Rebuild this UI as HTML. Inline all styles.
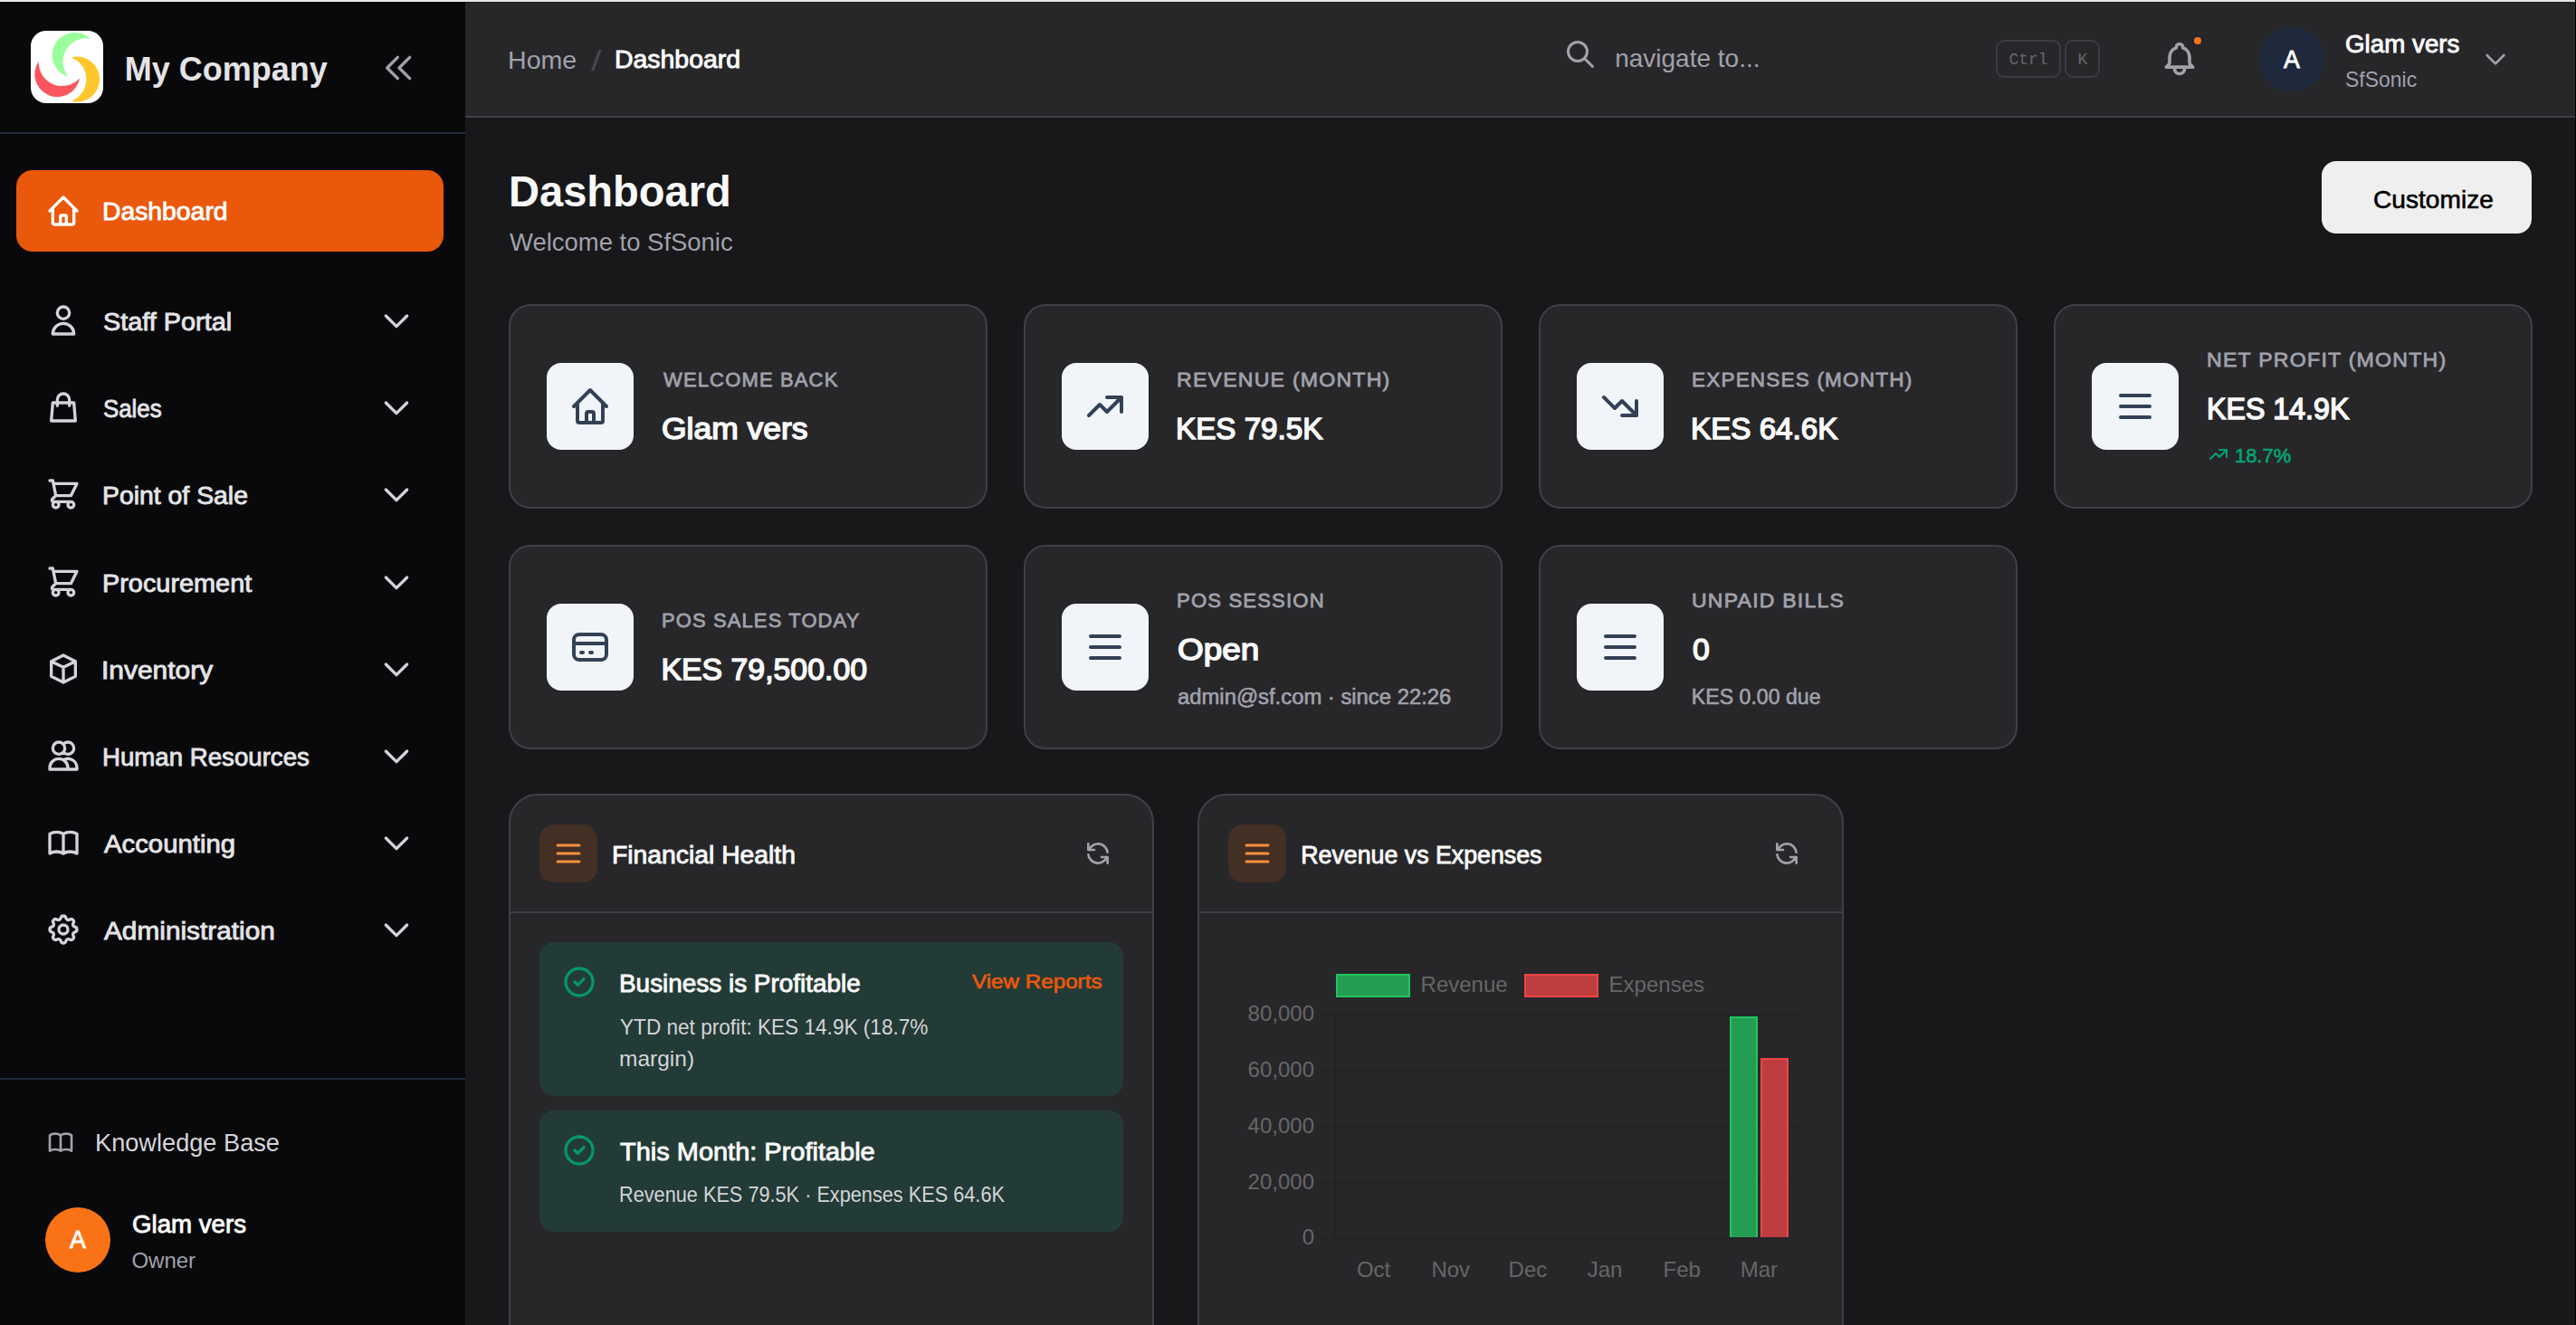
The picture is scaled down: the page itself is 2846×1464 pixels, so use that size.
<!DOCTYPE html>
<html lang="en"><head><meta charset="utf-8"><title>Dashboard - My Company</title>
<style>
html,body{margin:0;padding:0;background:#18181b;}
body{width:2846px;height:1464px;overflow:hidden;position:relative;font-family:"Liberation Sans",sans-serif;}
.a{position:absolute;box-sizing:border-box;}
.t{white-space:nowrap;line-height:1;transform-origin:0 0;font-family:"Liberation Sans",sans-serif;}
.m{font-family:"Liberation Mono",monospace;}
</style></head><body>
<div class="a" style="left:0px;top:0px;width:2846px;height:1464px;background:#18181b;"></div>
<div class="a" style="left:0px;top:2px;width:514px;height:1462px;background:#09090b;"></div>
<div class="a" style="left:514px;top:2px;width:2332px;height:126px;background:#27272a;"></div>
<div class="a" style="left:514px;top:128px;width:2332px;height:2px;background:#3f3f46;"></div>
<div class="a" style="left:0px;top:0px;width:2846px;height:1px;background:#e3e5e2;"></div>
<div class="a" style="left:0px;top:1px;width:2846px;height:1px;background:#ecedea;"></div>
<div class="a" style="left:0px;top:2px;width:514px;height:1px;background:#000;"></div>
<div class="a" style="left:514px;top:2px;width:2332px;height:1px;background:#1e1e21;"></div>
<div class="a" style="left:2845px;top:0px;width:1px;height:1464px;background:#000;"></div>
<div class="a" style="left:0px;top:146px;width:514px;height:2px;background:#1e293b;"></div>
<div class="a" style="left:0px;top:1191px;width:514px;height:2px;background:#1e293b;"></div>
<svg class="a" style="left:34px;top:34px" width="80" height="80" viewBox="0 0 80 80">
<rect width="80" height="80" rx="17" fill="#fff"/>
<path d="M65.8 8.7A25 25 0 1 0 41.7 50.9A25.8 25.8 0 0 1 65.8 8.7Z" fill="#99ff99"/>
<path d="M8.8 33.8A25 25 0 1 0 54 52.2A25.8 25.8 0 0 1 8.8 33.8Z" fill="#fb5660"/>
<path d="M44.7 77.7A25 25 0 1 0 44.7 29.4A25.8 25.8 0 0 1 44.7 77.7Z" fill="#ffc72c"/>
</svg>
<div class="a t" style="top:58.53px;font-size:36px;color:#e4e4e7;font-weight:700;left:137.76px;">My Company</div>
<svg class="a" style="left:421.0px;top:55.0px" width="40" height="40" viewBox="0 0 24 24" fill="none" stroke="#a1a1aa" stroke-width="2" stroke-linecap="round" stroke-linejoin="round"><path d="M11 19l-7-7 7-7m8 14l-7-7 7-7"/></svg>
<div class="a" style="left:18px;top:188px;width:472px;height:90px;background:#ea580c;border-radius:18px;"></div>
<svg class="a" style="left:50.0px;top:213.0px" width="40" height="40" viewBox="0 0 24 24" fill="none" stroke="#fff" stroke-width="2" stroke-linecap="round" stroke-linejoin="round"><path d="M3 12l2-2m0 0l7-7 7 7M5 10v10a1 1 0 001 1h3m10-11l2 2m-2-2v10a1 1 0 01-1 1h-3m-6 0a1 1 0 001-1v-4a1 1 0 011-1h2a1 1 0 011 1v4a1 1 0 001 1m-6 0h6"/></svg>
<div class="a t" style="top:220.91px;font-size:26.78px;color:#fff;transform:scaleX(1.0582);left:112.68px;-webkit-text-stroke:0.84px #fff;">Dashboard</div>
<svg class="a" style="left:50.0px;top:334.0px" width="40" height="40" viewBox="0 0 24 24" fill="none" stroke="#d4d4d8" stroke-width="2" stroke-linecap="round" stroke-linejoin="round"><path d="M16 7a4 4 0 11-8 0 4 4 0 018 0zM12 14a7 7 0 00-7 7h14a7 7 0 00-7-7z"/></svg>
<div class="a t" style="top:343.11px;font-size:26.78px;color:#e4e4e7;transform:scaleX(1.0776);left:113.65px;-webkit-text-stroke:0.84px #e4e4e7;">Staff Portal</div>
<svg class="a" style="left:418.0px;top:334.0px" width="40" height="40" viewBox="0 0 24 24" fill="none" stroke="#d4d4d8" stroke-width="2" stroke-linecap="round" stroke-linejoin="round"><path d="M19 9l-7 7-7-7"/></svg>
<svg class="a" style="left:50.0px;top:430.0px" width="40" height="40" viewBox="0 0 24 24" fill="none" stroke="#d4d4d8" stroke-width="2" stroke-linecap="round" stroke-linejoin="round"><path d="M16 11V7a4 4 0 00-8 0v4M5 9h14l1 12H4L5 9z"/></svg>
<div class="a t" style="top:439.26px;font-size:26.78px;color:#e4e4e7;transform:scaleX(0.9658);left:113.74px;-webkit-text-stroke:0.84px #e4e4e7;">Sales</div>
<svg class="a" style="left:418.0px;top:430.0px" width="40" height="40" viewBox="0 0 24 24" fill="none" stroke="#d4d4d8" stroke-width="2" stroke-linecap="round" stroke-linejoin="round"><path d="M19 9l-7 7-7-7"/></svg>
<svg class="a" style="left:50.0px;top:526.0px" width="40" height="40" viewBox="0 0 24 24" fill="none" stroke="#d4d4d8" stroke-width="2" stroke-linecap="round" stroke-linejoin="round"><path d="M3 3h2l.4 2M7 13h10l4-8H5.4M7 13L5.4 5M7 13l-2.293 2.293c-.63.63-.184 1.707.707 1.707H17m0 0a2 2 0 100 4 2 2 0 000-4zm-8 2a2 2 0 11-4 0 2 2 0 014 0z"/></svg>
<div class="a t" style="top:535.41px;font-size:26.78px;color:#e4e4e7;transform:scaleX(1.0604);left:112.67px;-webkit-text-stroke:0.84px #e4e4e7;">Point of Sale</div>
<svg class="a" style="left:418.0px;top:526.0px" width="40" height="40" viewBox="0 0 24 24" fill="none" stroke="#d4d4d8" stroke-width="2" stroke-linecap="round" stroke-linejoin="round"><path d="M19 9l-7 7-7-7"/></svg>
<svg class="a" style="left:50.0px;top:623.0px" width="40" height="40" viewBox="0 0 24 24" fill="none" stroke="#d4d4d8" stroke-width="2" stroke-linecap="round" stroke-linejoin="round"><path d="M3 3h2l.4 2M7 13h10l4-8H5.4M7 13L5.4 5M7 13l-2.293 2.293c-.63.63-.184 1.707.707 1.707H17m0 0a2 2 0 100 4 2 2 0 000-4zm-8 2a2 2 0 11-4 0 2 2 0 014 0z"/></svg>
<div class="a t" style="top:631.56px;font-size:26.78px;color:#e4e4e7;transform:scaleX(1.0785);left:112.64px;-webkit-text-stroke:0.84px #e4e4e7;">Procurement</div>
<svg class="a" style="left:418.0px;top:623.0px" width="40" height="40" viewBox="0 0 24 24" fill="none" stroke="#d4d4d8" stroke-width="2" stroke-linecap="round" stroke-linejoin="round"><path d="M19 9l-7 7-7-7"/></svg>
<svg class="a" style="left:50.0px;top:719.0px" width="40" height="40" viewBox="0 0 24 24" fill="none" stroke="#d4d4d8" stroke-width="2" stroke-linecap="round" stroke-linejoin="round"><path d="M20 7l-8-4-8 4m16 0l-8 4m8-4v10l-8 4m0-10L4 7m8 4v10M4 7v10l8 4"/></svg>
<div class="a t" style="top:727.71px;font-size:26.78px;color:#e4e4e7;transform:scaleX(1.1185);left:112.27px;-webkit-text-stroke:0.84px #e4e4e7;">Inventory</div>
<svg class="a" style="left:418.0px;top:719.0px" width="40" height="40" viewBox="0 0 24 24" fill="none" stroke="#d4d4d8" stroke-width="2" stroke-linecap="round" stroke-linejoin="round"><path d="M19 9l-7 7-7-7"/></svg>
<svg class="a" style="left:50.0px;top:815.0px" width="40" height="40" viewBox="0 0 24 24" fill="none" stroke="#d4d4d8" stroke-width="2" stroke-linecap="round" stroke-linejoin="round"><path d="M12 4.354a4 4 0 110 5.292M15 21H3v-1a6 6 0 0112 0v1zm0 0h6v-1a6 6 0 00-9-5.197M13 7a4 4 0 11-8 0 4 4 0 018 0z"/></svg>
<div class="a t" style="top:823.86px;font-size:26.78px;color:#e4e4e7;transform:scaleX(1.0324);left:112.72px;-webkit-text-stroke:0.84px #e4e4e7;">Human Resources</div>
<svg class="a" style="left:418.0px;top:815.0px" width="40" height="40" viewBox="0 0 24 24" fill="none" stroke="#d4d4d8" stroke-width="2" stroke-linecap="round" stroke-linejoin="round"><path d="M19 9l-7 7-7-7"/></svg>
<svg class="a" style="left:50.0px;top:911.0px" width="40" height="40" viewBox="0 0 24 24" fill="none" stroke="#d4d4d8" stroke-width="2" stroke-linecap="round" stroke-linejoin="round"><path d="M12 6.253v13m0-13C10.832 5.477 9.246 5 7.5 5S4.168 5.477 3 6.253v13C4.168 18.477 5.754 18 7.5 18s3.332.477 4.5 1.253m0-13C13.168 5.477 14.754 5 16.5 5c1.747 0 3.332.477 4.5 1.253v13C19.832 18.477 18.247 18 16.5 18c-1.746 0-3.332.477-4.5 1.253"/></svg>
<div class="a t" style="top:920.01px;font-size:26.78px;color:#e4e4e7;transform:scaleX(1.0952);left:114.96px;-webkit-text-stroke:0.84px #e4e4e7;">Accounting</div>
<svg class="a" style="left:418.0px;top:911.0px" width="40" height="40" viewBox="0 0 24 24" fill="none" stroke="#d4d4d8" stroke-width="2" stroke-linecap="round" stroke-linejoin="round"><path d="M19 9l-7 7-7-7"/></svg>
<svg class="a" style="left:50.0px;top:1007.0px" width="40" height="40" viewBox="0 0 24 24" fill="none" stroke="#d4d4d8" stroke-width="2" stroke-linecap="round" stroke-linejoin="round"><path d="M10.325 4.317c.426-1.756 2.924-1.756 3.35 0a1.724 1.724 0 002.573 1.066c1.543-.94 3.31.826 2.37 2.37a1.724 1.724 0 001.065 2.572c1.756.426 1.756 2.924 0 3.35a1.724 1.724 0 00-1.066 2.573c.94 1.543-.826 3.31-2.37 2.37a1.724 1.724 0 00-2.572 1.065c-.426 1.756-2.924 1.756-3.35 0a1.724 1.724 0 00-2.573-1.066c-1.543.94-3.31-.826-2.37-2.37a1.724 1.724 0 00-1.065-2.572c-1.756-.426-1.756-2.924 0-3.35a1.724 1.724 0 001.066-2.573c-.94-1.543.826-3.31 2.37-2.37.996.608 2.296.07 2.572-1.065zM15 12a3 3 0 11-6 0 3 3 0 016 0z"/></svg>
<div class="a t" style="top:1016.16px;font-size:26.78px;color:#e4e4e7;transform:scaleX(1.1132);left:114.97px;-webkit-text-stroke:0.84px #e4e4e7;">Administration</div>
<svg class="a" style="left:418.0px;top:1007.0px" width="40" height="40" viewBox="0 0 24 24" fill="none" stroke="#d4d4d8" stroke-width="2" stroke-linecap="round" stroke-linejoin="round"><path d="M19 9l-7 7-7-7"/></svg>
<svg class="a" style="left:50.5px;top:1246.0px" width="32" height="32" viewBox="0 0 24 24" fill="none" stroke="#a1a1aa" stroke-width="2" stroke-linecap="round" stroke-linejoin="round"><path d="M12 6.253v13m0-13C10.832 5.477 9.246 5 7.5 5S4.168 5.477 3 6.253v13C4.168 18.477 5.754 18 7.5 18s3.332.477 4.5 1.253m0-13C13.168 5.477 14.754 5 16.5 5c1.747 0 3.332.477 4.5 1.253v13C19.832 18.477 18.247 18 16.5 18c-1.746 0-3.332.477-4.5 1.253"/></svg>
<div class="a t" style="top:1249.00px;font-size:28px;color:#d4d4d8;transform:scaleX(0.9706);left:104.63px;">Knowledge Base</div>
<div class="a" style="left:50px;top:1334px;width:72px;height:72px;background:#f97316;border-radius:36px;"></div>
<div class="a t" style="top:1357.21px;font-size:26.78px;color:#fff;left:-414px;width:1000px;text-align:center;-webkit-text-stroke:0.84px #fff;">A</div>
<div class="a t" style="top:1339.61px;font-size:26.78px;color:#fff;transform:scaleX(1.0336);left:145.55px;-webkit-text-stroke:0.84px #fff;">Glam vers</div>
<div class="a t" style="top:1380.68px;font-size:24px;color:#a1a1aa;left:145.42px;">Owner</div>
<div class="a t" style="top:52.90px;font-size:28px;color:#a1a1aa;transform:scaleX(1.0202);left:561.31px;">Home</div>
<div class="a t" style="top:50.91px;font-size:32px;color:#48484f;left:652.50px;transform:scaleX(1.3);">/</div>
<div class="a t" style="top:53.41px;font-size:26.78px;color:#fff;transform:scaleX(1.0621);left:679.17px;-webkit-text-stroke:0.84px #fff;">Dashboard</div>
<svg class="a" style="left:1728.0px;top:42.0px" width="36" height="36" viewBox="0 0 24 24" fill="none" stroke="#a1a1aa" stroke-width="2" stroke-linecap="round" stroke-linejoin="round"><path d="M21 21l-6-6m2-5a7 7 0 11-14 0 7 7 0 0114 0z"/></svg>
<div class="a t" style="top:51.00px;font-size:28px;color:#a1a1aa;left:1784.18px;">navigate to...</div>
<div class="a" style="left:2205px;top:44px;width:72px;height:42px;border-radius:9px;border:2px solid #3a3a40;"></div>
<div class="a t m" style="top:57.10px;font-size:18px;color:#66666e;left:1741px;width:1000px;text-align:center;">Ctrl</div>
<div class="a" style="left:2281px;top:44px;width:39px;height:42px;border-radius:9px;border:2px solid #3a3a40;"></div>
<div class="a t m" style="top:57.10px;font-size:18px;color:#66666e;left:1801px;width:1000px;text-align:center;">K</div>
<svg class="a" style="left:2386.0px;top:43.0px" width="44" height="44" viewBox="0 0 24 24" fill="none" stroke="#a1a1aa" stroke-width="2" stroke-linecap="round" stroke-linejoin="round"><path d="M15 17h5l-1.405-1.405A2.032 2.032 0 0118 14.158V11a6.002 6.002 0 00-4-5.659V5a2 2 0 10-4 0v.341C7.67 6.165 6 8.388 6 11v3.159c0 .538-.214 1.055-.595 1.436L4 17h5m6 0v1a3 3 0 11-6 0v-1m6 0H9"/></svg>
<div class="a" style="left:2424px;top:41px;width:8px;height:8px;background:#f97316;border-radius:4px;box-shadow:0 0 0 2px #222531;"></div>
<div class="a" style="left:2496px;top:29px;width:72px;height:72px;background:#1e293b;border-radius:36px;"></div>
<div class="a t" style="top:52.91px;font-size:26.78px;color:#fff;left:2032px;width:1000px;text-align:center;-webkit-text-stroke:0.84px #fff;">A</div>
<div class="a t" style="top:36.31px;font-size:26.78px;color:#fff;transform:scaleX(1.0369);left:2590.65px;-webkit-text-stroke:0.84px #fff;">Glam vers</div>
<div class="a t" style="top:76.28px;font-size:24px;color:#a1a1aa;transform:scaleX(0.9568);left:2590.57px;">SfSonic</div>
<svg class="a" style="left:2741.0px;top:49.0px" width="32" height="32" viewBox="0 0 24 24" fill="none" stroke="#a1a1aa" stroke-width="2" stroke-linecap="round" stroke-linejoin="round"><path d="M19 9l-7 7-7-7"/></svg>
<div class="a t" style="top:187.87px;font-size:48px;color:#fafafa;font-weight:700;transform:scaleX(0.9803);left:561.94px;">Dashboard</div>
<div class="a t" style="top:254.30px;font-size:28px;color:#a1a1aa;transform:scaleX(0.9805);left:562.50px;">Welcome to SfSonic</div>
<div class="a" style="left:2565px;top:178px;width:232px;height:80px;background:#efefef;border-radius:16px;"></div>
<div class="a t" style="top:206.70px;font-size:27.2px;color:#000;transform:scaleX(1.0346);left:2621.88px;-webkit-text-stroke:0.55px #000;">Customize</div>
<div class="a" style="left:562px;top:336px;width:529px;height:226px;background:#27272a;border-radius:24px;border:2px solid #3f3f46;"></div>
<div class="a" style="left:604px;top:401.0px;width:96px;height:96px;background:#f1f5f9;border-radius:16px;"></div>
<svg class="a" style="left:628.0px;top:425.0px" width="48" height="48" viewBox="0 0 24 24" fill="none" stroke="#334155" stroke-width="2" stroke-linecap="round" stroke-linejoin="round"><path d="M3 12l2-2m0 0l7-7 7 7M5 10v10a1 1 0 001 1h3m10-11l2 2m-2-2v10a1 1 0 01-1 1h-3m-6 0a1 1 0 001-1v-4a1 1 0 011-1h2a1 1 0 011 1v4a1 1 0 001 1m-6 0h6"/></svg>
<div class="a t" style="top:408.27px;font-size:22.84px;color:#a1a1aa;letter-spacing:1.2px;transform:scaleX(0.9632);left:732.79px;-webkit-text-stroke:0.8px #a1a1aa;">WELCOME BACK</div>
<div class="a t" style="top:456.81px;font-size:33.83px;color:#fafafa;transform:scaleX(1.0477);left:731.41px;-webkit-text-stroke:1.5px #fafafa;">Glam vers</div>
<div class="a" style="left:1131px;top:336px;width:529px;height:226px;background:#27272a;border-radius:24px;border:2px solid #3f3f46;"></div>
<div class="a" style="left:1173px;top:401.0px;width:96px;height:96px;background:#f1f5f9;border-radius:16px;"></div>
<svg class="a" style="left:1197.0px;top:425.0px" width="48" height="48" viewBox="0 0 24 24" fill="none" stroke="#334155" stroke-width="2" stroke-linecap="round" stroke-linejoin="round"><path d="M13 7h8m0 0v8m0-8l-8 8-4-4-6 6"/></svg>
<div class="a t" style="top:408.27px;font-size:22.84px;color:#a1a1aa;letter-spacing:1.2px;transform:scaleX(1.0125);left:1299.95px;-webkit-text-stroke:0.8px #a1a1aa;">REVENUE (MONTH)</div>
<div class="a t" style="top:456.81px;font-size:33.83px;color:#fafafa;transform:scaleX(0.9814);left:1299.48px;-webkit-text-stroke:1.5px #fafafa;">KES 79.5K</div>
<div class="a" style="left:1700px;top:336px;width:529px;height:226px;background:#27272a;border-radius:24px;border:2px solid #3f3f46;"></div>
<div class="a" style="left:1742px;top:401.0px;width:96px;height:96px;background:#f1f5f9;border-radius:16px;"></div>
<svg class="a" style="left:1766.0px;top:425.0px" width="48" height="48" viewBox="0 0 24 24" fill="none" stroke="#334155" stroke-width="2" stroke-linecap="round" stroke-linejoin="round"><path d="M13 17h8m0 0V9m0 8l-8-8-4 4-6-6"/></svg>
<div class="a t" style="top:408.27px;font-size:22.84px;color:#a1a1aa;letter-spacing:1.2px;transform:scaleX(0.9872);left:1868.99px;-webkit-text-stroke:0.8px #a1a1aa;">EXPENSES (MONTH)</div>
<div class="a t" style="top:456.81px;font-size:33.83px;color:#fafafa;transform:scaleX(0.9814);left:1868.48px;-webkit-text-stroke:1.5px #fafafa;">KES 64.6K</div>
<div class="a" style="left:2269px;top:336px;width:529px;height:226px;background:#27272a;border-radius:24px;border:2px solid #3f3f46;"></div>
<div class="a" style="left:2311px;top:401.0px;width:96px;height:96px;background:#f1f5f9;border-radius:16px;"></div>
<svg class="a" style="left:2335.0px;top:425.0px" width="48" height="48" viewBox="0 0 24 24" fill="none" stroke="#334155" stroke-width="2" stroke-linecap="round" stroke-linejoin="round"><path d="M4 6h16M4 12h16M4 18h16"/></svg>
<div class="a t" style="top:386.27px;font-size:22.84px;color:#a1a1aa;letter-spacing:1.2px;transform:scaleX(1.0144);left:2437.95px;-webkit-text-stroke:0.8px #a1a1aa;">NET PROFIT (MONTH)</div>
<div class="a t" style="top:435.31px;font-size:33.83px;color:#fafafa;transform:scaleX(0.9509);left:2437.54px;-webkit-text-stroke:1.5px #fafafa;">KES 14.9K</div>
<svg class="a" style="left:2438.7000000000003px;top:490.0px" width="24" height="24" viewBox="0 0 24 24" fill="none" stroke="#06a170" stroke-width="2" stroke-linecap="round" stroke-linejoin="round"><path d="M13 7h8m0 0v8m0-8l-8 8-4-4-6 6"/></svg>
<div class="a t" style="top:492.40px;font-size:22.96px;color:#06a170;transform:scaleX(0.9544);left:2469.10px;-webkit-text-stroke:0.72px #06a170;">18.7%</div>
<div class="a" style="left:562px;top:602px;width:529px;height:226px;background:#27272a;border-radius:24px;border:2px solid #3f3f46;"></div>
<div class="a" style="left:604px;top:667.0px;width:96px;height:96px;background:#f1f5f9;border-radius:16px;"></div>
<svg class="a" style="left:628.0px;top:691.0px" width="48" height="48" viewBox="0 0 24 24" fill="none" stroke="#334155" stroke-width="2" stroke-linecap="round" stroke-linejoin="round"><path d="M3 10h18M7 15h1m4 0h1m-7 4h12a3 3 0 003-3V8a3 3 0 00-3-3H6a3 3 0 00-3 3v8a3 3 0 003 3z"/></svg>
<div class="a t" style="top:674.27px;font-size:22.84px;color:#a1a1aa;letter-spacing:1.2px;transform:scaleX(0.9601);left:731.03px;-webkit-text-stroke:0.8px #a1a1aa;">POS SALES TODAY</div>
<div class="a t" style="top:722.81px;font-size:33.83px;color:#fafafa;left:730.44px;-webkit-text-stroke:1.5px #fafafa;">KES 79,500.00</div>
<div class="a" style="left:1131px;top:602px;width:529px;height:226px;background:#27272a;border-radius:24px;border:2px solid #3f3f46;"></div>
<div class="a" style="left:1173px;top:667.0px;width:96px;height:96px;background:#f1f5f9;border-radius:16px;"></div>
<svg class="a" style="left:1197.0px;top:691.0px" width="48" height="48" viewBox="0 0 24 24" fill="none" stroke="#334155" stroke-width="2" stroke-linecap="round" stroke-linejoin="round"><path d="M4 6h16M4 12h16M4 18h16"/></svg>
<div class="a t" style="top:652.27px;font-size:22.84px;color:#a1a1aa;letter-spacing:1.2px;transform:scaleX(0.9675);left:1300.02px;-webkit-text-stroke:0.8px #a1a1aa;">POS SESSION</div>
<div class="a t" style="top:701.31px;font-size:33.83px;color:#fafafa;transform:scaleX(1.0910);left:1300.56px;-webkit-text-stroke:1.5px #fafafa;">Open</div>
<div class="a t" style="top:759.12px;font-size:23.13px;color:#a1a1aa;transform:scaleX(1.0303);left:1300.76px;-webkit-text-stroke:0.6px #a1a1aa;">admin@sf.com · since 22:26</div>
<div class="a" style="left:1700px;top:602px;width:529px;height:226px;background:#27272a;border-radius:24px;border:2px solid #3f3f46;"></div>
<div class="a" style="left:1742px;top:667.0px;width:96px;height:96px;background:#f1f5f9;border-radius:16px;"></div>
<svg class="a" style="left:1766.0px;top:691.0px" width="48" height="48" viewBox="0 0 24 24" fill="none" stroke="#334155" stroke-width="2" stroke-linecap="round" stroke-linejoin="round"><path d="M4 6h16M4 12h16M4 18h16"/></svg>
<div class="a t" style="top:652.27px;font-size:22.84px;color:#a1a1aa;letter-spacing:1.2px;transform:scaleX(1.0090);left:1869.08px;-webkit-text-stroke:0.8px #a1a1aa;">UNPAID BILLS</div>
<div class="a t" style="top:701.31px;font-size:33.83px;color:#fafafa;left:1869.97px;-webkit-text-stroke:1.5px #fafafa;">0</div>
<div class="a t" style="top:759.12px;font-size:23.13px;color:#a1a1aa;left:1868.85px;-webkit-text-stroke:0.6px #a1a1aa;">KES 0.00 due</div>
<div class="a" style="left:562px;top:877px;width:713.3px;height:640px;background:#27272a;border-radius:32px;border:2px solid #3f3f46;"></div>
<div class="a" style="left:596px;top:911px;width:64px;height:64px;background:#442f25;border-radius:16px;"></div>
<svg class="a" style="left:610.0px;top:925.0px" width="36" height="36" viewBox="0 0 24 24" fill="none" stroke="#fb923c" stroke-width="2" stroke-linecap="round" stroke-linejoin="round"><path d="M4 6h16M4 12h16M4 18h16"/></svg>
<div class="a t" style="top:931.91px;font-size:26.78px;color:#fafafa;transform:scaleX(1.0576);left:675.78px;-webkit-text-stroke:0.84px #fafafa;">Financial Health</div>
<svg class="a" style="left:1197.0px;top:927.0px" width="32" height="32" viewBox="0 0 24 24" fill="none" stroke="#a1a1aa" stroke-width="2" stroke-linecap="round" stroke-linejoin="round"><path d="M4 4v5h.582m15.356 2A8.001 8.001 0 004.582 9m0 0H9m11 11v-5h-.581m0 0a8.003 8.003 0 01-15.357-2m15.357 2H15"/></svg>
<div class="a" style="left:564px;top:1007px;width:709.3px;height:2px;background:#3f3f46;"></div>
<div class="a" style="left:1323.3px;top:877px;width:713.3px;height:640px;background:#27272a;border-radius:32px;border:2px solid #3f3f46;"></div>
<div class="a" style="left:1357.3px;top:911px;width:64px;height:64px;background:#442f25;border-radius:16px;"></div>
<svg class="a" style="left:1371.3px;top:925.0px" width="36" height="36" viewBox="0 0 24 24" fill="none" stroke="#fb923c" stroke-width="2" stroke-linecap="round" stroke-linejoin="round"><path d="M4 6h16M4 12h16M4 18h16"/></svg>
<div class="a t" style="top:931.91px;font-size:26.78px;color:#fafafa;left:1437.18px;-webkit-text-stroke:0.84px #fafafa;">Revenue vs Expenses</div>
<svg class="a" style="left:1958.3px;top:927.0px" width="32" height="32" viewBox="0 0 24 24" fill="none" stroke="#a1a1aa" stroke-width="2" stroke-linecap="round" stroke-linejoin="round"><path d="M4 4v5h.582m15.356 2A8.001 8.001 0 004.582 9m0 0H9m11 11v-5h-.581m0 0a8.003 8.003 0 01-15.357-2m15.357 2H15"/></svg>
<div class="a" style="left:1325.3px;top:1007px;width:709.3px;height:2px;background:#3f3f46;"></div>
<div class="a" style="left:596px;top:1041px;width:645px;height:170px;background:#233b36;border-radius:16px;"></div>
<svg class="a" style="left:620.0px;top:1065.0px" width="40" height="40" viewBox="0 0 24 24" fill="none" stroke="#059669" stroke-width="2" stroke-linecap="round" stroke-linejoin="round"><path d="M9 12l2 2 4-4m6 2a9 9 0 11-18 0 9 9 0 0118 0z"/></svg>
<div class="a t" style="top:1073.91px;font-size:26.78px;color:#fafafa;transform:scaleX(1.0424);left:683.50px;-webkit-text-stroke:0.84px #fafafa;">Business is Profitable</div>
<div class="a t" style="top:1073.20px;font-size:22.96px;color:#ea580c;transform:scaleX(1.0546);left:1073.58px;-webkit-text-stroke:0.72px #ea580c;">View Reports</div>
<div class="a t" style="top:1122.68px;font-size:24px;color:#d4d4d8;transform:scaleX(0.9416);left:684.85px;">YTD net profit: KES 14.9K (18.7%</div>
<div class="a t" style="top:1158.28px;font-size:24px;color:#d4d4d8;transform:scaleX(1.0209);left:683.71px;">margin)</div>
<div class="a" style="left:596px;top:1227px;width:645px;height:134px;background:#233b36;border-radius:16px;"></div>
<svg class="a" style="left:620.0px;top:1251.0px" width="40" height="40" viewBox="0 0 24 24" fill="none" stroke="#059669" stroke-width="2" stroke-linecap="round" stroke-linejoin="round"><path d="M9 12l2 2 4-4m6 2a9 9 0 11-18 0 9 9 0 0118 0z"/></svg>
<div class="a t" style="top:1259.91px;font-size:26.78px;color:#fafafa;transform:scaleX(1.0821);left:685.17px;-webkit-text-stroke:0.84px #fafafa;">This Month: Profitable</div>
<div class="a t" style="top:1308.38px;font-size:24px;color:#d4d4d8;transform:scaleX(0.9044);left:683.56px;">Revenue KES 79.5K · Expenses KES 64.6K</div>
<div class="a" style="left:1476px;top:1076px;width:82px;height:26px;background:#239d52;border:2px solid #22c55e;"></div>
<div class="a t" style="top:1076.28px;font-size:24px;color:#666666;left:1569.58px;">Revenue</div>
<div class="a" style="left:1684px;top:1076px;width:82px;height:26px;background:#be3e3f;border:2px solid #ef4444;"></div>
<div class="a t" style="top:1076.28px;font-size:24px;color:#666666;left:1777.58px;">Expenses</div>
<div class="a" style="left:1459px;top:1120px;width:527px;height:2px;background:#232326;"></div>
<div class="a t" style="top:1108.28px;font-size:24px;color:#666666;right:1394px;">80,000</div>
<div class="a" style="left:1459px;top:1182px;width:527px;height:2px;background:#232326;"></div>
<div class="a t" style="top:1170.08px;font-size:24px;color:#666666;right:1394px;">60,000</div>
<div class="a" style="left:1459px;top:1244px;width:527px;height:2px;background:#232326;"></div>
<div class="a t" style="top:1231.88px;font-size:24px;color:#666666;right:1394px;">40,000</div>
<div class="a" style="left:1459px;top:1305px;width:527px;height:2px;background:#232326;"></div>
<div class="a t" style="top:1293.68px;font-size:24px;color:#666666;right:1394px;">20,000</div>
<div class="a" style="left:1459px;top:1367px;width:527px;height:2px;background:#232326;"></div>
<div class="a t" style="top:1355.48px;font-size:24px;color:#666666;right:1394px;">0</div>
<div class="a" style="left:1474px;top:1119px;width:2px;height:250px;background:#232326;"></div>
<div class="a t" style="top:1390.68px;font-size:24px;color:#666666;left:1017.5833333333333px;width:1000px;text-align:center;">Oct</div>
<div class="a t" style="top:1390.68px;font-size:24px;color:#666666;left:1102.75px;width:1000px;text-align:center;">Nov</div>
<div class="a t" style="top:1390.68px;font-size:24px;color:#666666;left:1187.9166666666667px;width:1000px;text-align:center;">Dec</div>
<div class="a t" style="top:1390.68px;font-size:24px;color:#666666;left:1273.0833333333333px;width:1000px;text-align:center;">Jan</div>
<div class="a t" style="top:1390.68px;font-size:24px;color:#666666;left:1358.25px;width:1000px;text-align:center;">Feb</div>
<div class="a t" style="top:1390.68px;font-size:24px;color:#666666;left:1443.4166666666667px;width:1000px;text-align:center;">Mar</div>
<div class="a" style="left:1911px;top:1122.5px;width:31px;height:244.5px;background:#239d52;border:2px solid #22c55e;border-bottom:none;"></div>
<div class="a" style="left:1945px;top:1168.5px;width:31px;height:198.5px;background:#be3e3f;border:2px solid #ef4444;border-bottom:none;"></div>
</body></html>
